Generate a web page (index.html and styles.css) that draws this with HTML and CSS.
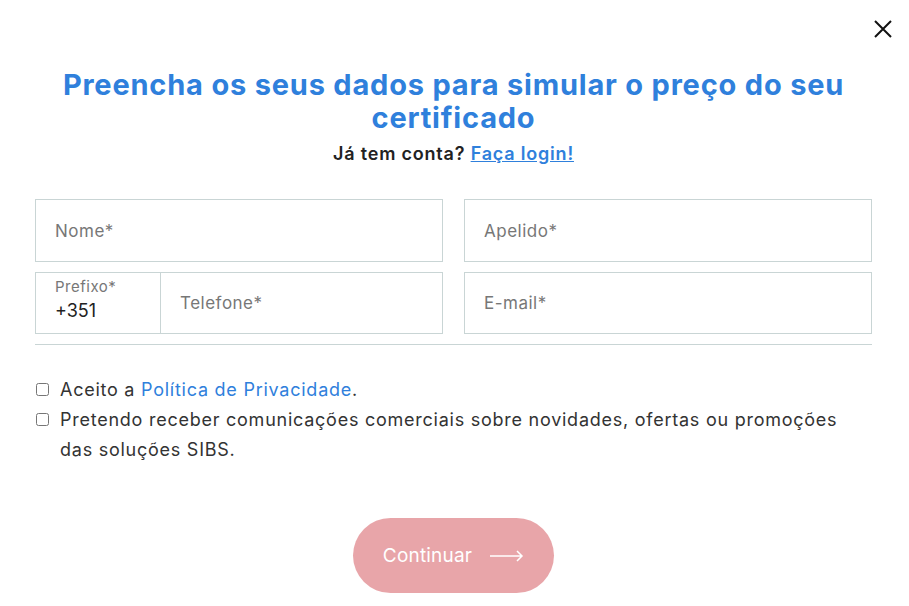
FILE: index.html
```html
<!DOCTYPE html>
<html lang="pt">
  <head>
    <meta charset="UTF-8" />
    <meta name="viewport" content="width=device-width, initial-scale=1.0" />
    <title>Simular certificado</title>
    <link rel="stylesheet" href="styles.css">
  </head>
  <body>
    <div class="modal">
      <button class="close-btn" aria-label="Fechar">
        <svg width="18" height="18" viewBox="0 0 18 18">
          <path d="M1 1 L17 17 M17 1 L1 17" stroke="#111" stroke-width="2" fill="none" />
        </svg>
      </button>

      <h2 class="title">Preencha os seus dados para simular o preço do seu certificado</h2>
      <p class="login">Já tem conta? <a href="#">Faça login!</a></p>

      <form class="form">
        <div class="grid">
          <div class="field"><input type="text" placeholder="Nome*" /></div>
          <div class="field"><input type="text" placeholder="Apelido*" /></div>
          <div class="field phone">
            <div class="prefix">
              <span class="prefix-label">Prefixo*</span>
              <span class="prefix-value">+351</span>
            </div>
            <input type="tel" placeholder="Telefone*" />
          </div>
          <div class="field phone"><input type="email" placeholder="E-mail*" /></div>
        </div>

        <hr class="divider" />

        <label class="check">
          <input type="checkbox" />
          <span>Aceito a <a href="#">Política de Privacidade</a>.</span>
        </label>
        <label class="check">
          <input type="checkbox" />
          <span>Pretendo receber comunicações comerciais sobre novidades, ofertas ou promoções das soluções SIBS.</span>
        </label>

        <div class="actions">
          <button type="button" class="continue-btn" disabled>
            Continuar
            <svg width="34" height="12" viewBox="0 0 34 12">
              <path d="M0 6 H32 M27 1 L32 6 L27 11" stroke="#fff" stroke-width="1.5" fill="none" />
            </svg>
          </button>
        </div>
      </form>
    </div>
  </body>
</html>
```

FILE: styles.css
```css
body {
  margin: 0;
  background: #fff;
  font-family: Inter, "Noto Sans", sans-serif;
  color: #333;
}
.modal {
  position: relative;
  padding: 68px 37px 0 35px;
}
.close-btn {
  position: absolute;
  top: 20px;
  right: 17px;
  padding: 0;
  border: none;
  background: none;
  cursor: pointer;
}
.title {
  margin: 0 auto;
  max-width: 820px;
  text-align: center;
  font-family: Inter, sans-serif;
  font-weight: 700;
  font-size: 29px;
  line-height: 33px;
  letter-spacing: 0.8px;
  color: #2f80dc;
}
.login {
  margin: 9px 0 0;
  text-align: center;
  font-weight: 600;
  font-size: 18px;
  line-height: 22px;
  letter-spacing: 0.8px;
  color: #222;
}
.login a {
  color: #2f80dc;
}
.form {
  margin-top: 34px;
}
.grid {
  display: grid;
  grid-template-columns: repeat(2, minmax(0, 1fr));
  column-gap: 21px;
  row-gap: 10px;
}
.field {
  display: flex;
  height: 63px;
  box-sizing: border-box;
  border: 1px solid #c9d5d5;
}
.field input {
  flex: 1;
  min-width: 0;
  border: none;
  outline: none;
  padding: 0 19px;
  font-family: Inter, sans-serif;
  font-size: 17px;
  letter-spacing: 0.5px;
  color: #333;
  background: transparent;
}
.field input::placeholder {
  color: #777;
}
.phone {
  height: 62px;
}
.prefix {
  display: flex;
  flex-direction: column;
  width: 125px;
  padding: 5px 0 0 19px;
  box-sizing: border-box;
  border-right: 1px solid #c9d5d5;
}
.prefix-label {
  font-size: 15px;
  line-height: 18px;
  letter-spacing: 0.5px;
  color: #777;
}
.prefix-value {
  margin-top: 3px;
  font-size: 18px;
  line-height: 24px;
  color: #222;
}
.divider {
  margin: 10px 0 0;
  border: none;
  border-top: 1px solid #c9d5d5;
}
.check {
  display: flex;
  align-items: flex-start;
  gap: 11px;
  font-size: 18px;
  line-height: 30px;
  letter-spacing: 0.75px;
  color: #333;
}
.check span {
  max-width: 790px;
}
.check:first-of-type {
  margin-top: 30px;
}
.check input {
  margin: 8px 0 0 1px;
  width: 13px;
  height: 13px;
}
.check a {
  color: #2f80dc;
  text-decoration: none;
}
.actions {
  display: flex;
  justify-content: center;
  margin-top: 53px;
}
.continue-btn {
  display: flex;
  align-items: center;
  gap: 18px;
  height: 75px;
  padding: 0 30px;
  border: none;
  border-radius: 38px;
  background: #e8a5a9;
  color: #fff;
  font-family: Inter, sans-serif;
  font-size: 19px;
  letter-spacing: 0.2px;
}
```
